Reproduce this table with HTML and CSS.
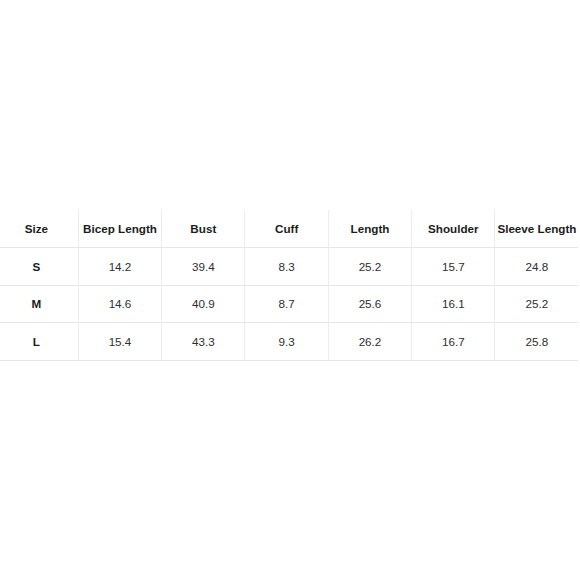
FILE: index.html
```html
<!DOCTYPE html>
<html>
<head>
<meta charset="utf-8">
<link rel="stylesheet" href="styles.css">
</head>
<body>
<div class="page">
<table class="size-table">
  <thead>
    <tr>
      <th>Size</th><th>Bicep Length</th><th>Bust</th><th>Cuff</th><th>Length</th><th>Shoulder</th><th>Sleeve Length</th>
    </tr>
  </thead>
  <tbody>
    <tr><td class="size">S</td><td>14.2</td><td>39.4</td><td>8.3</td><td>25.2</td><td>15.7</td><td>24.8</td></tr>
    <tr><td class="size">M</td><td>14.6</td><td>40.9</td><td>8.7</td><td>25.6</td><td>16.1</td><td>25.2</td></tr>
    <tr><td class="size">L</td><td>15.4</td><td>43.3</td><td>9.3</td><td>26.2</td><td>16.7</td><td>25.8</td></tr>
  </tbody>
</table>
</div>
</body>
</html>
```
FILE: styles.css
```css
html, body {
  margin: 0;
  padding: 0;
  background: #ffffff;
}
.page {
  width: 580px;
  height: 580px;
  overflow: hidden;
  padding-top: 210px;
  box-sizing: border-box;
}
.size-table {
  margin-left: -5px;
  width: 583.33px;
  table-layout: fixed;
  border-collapse: collapse;
  font-family: "Liberation Sans", Arial, sans-serif;
  font-size: 11.67px;
}
.size-table th,
.size-table td {
  padding: 0;
  text-align: center;
  vertical-align: middle;
  border-bottom: 1px solid #e6e6e6;
  border-left: 1px solid #ececec;
}
.size-table th:first-child,
.size-table td:first-child {
  border-left: none;
}
.size-table th {
  height: 37px;
  font-weight: bold;
  color: #1c1c1c;
}
.size-table td {
  height: 36.5px;
  color: #2e2e2e;
}
.size-table td.size {
  font-weight: bold;
  color: #1c1c1c;
}
```
